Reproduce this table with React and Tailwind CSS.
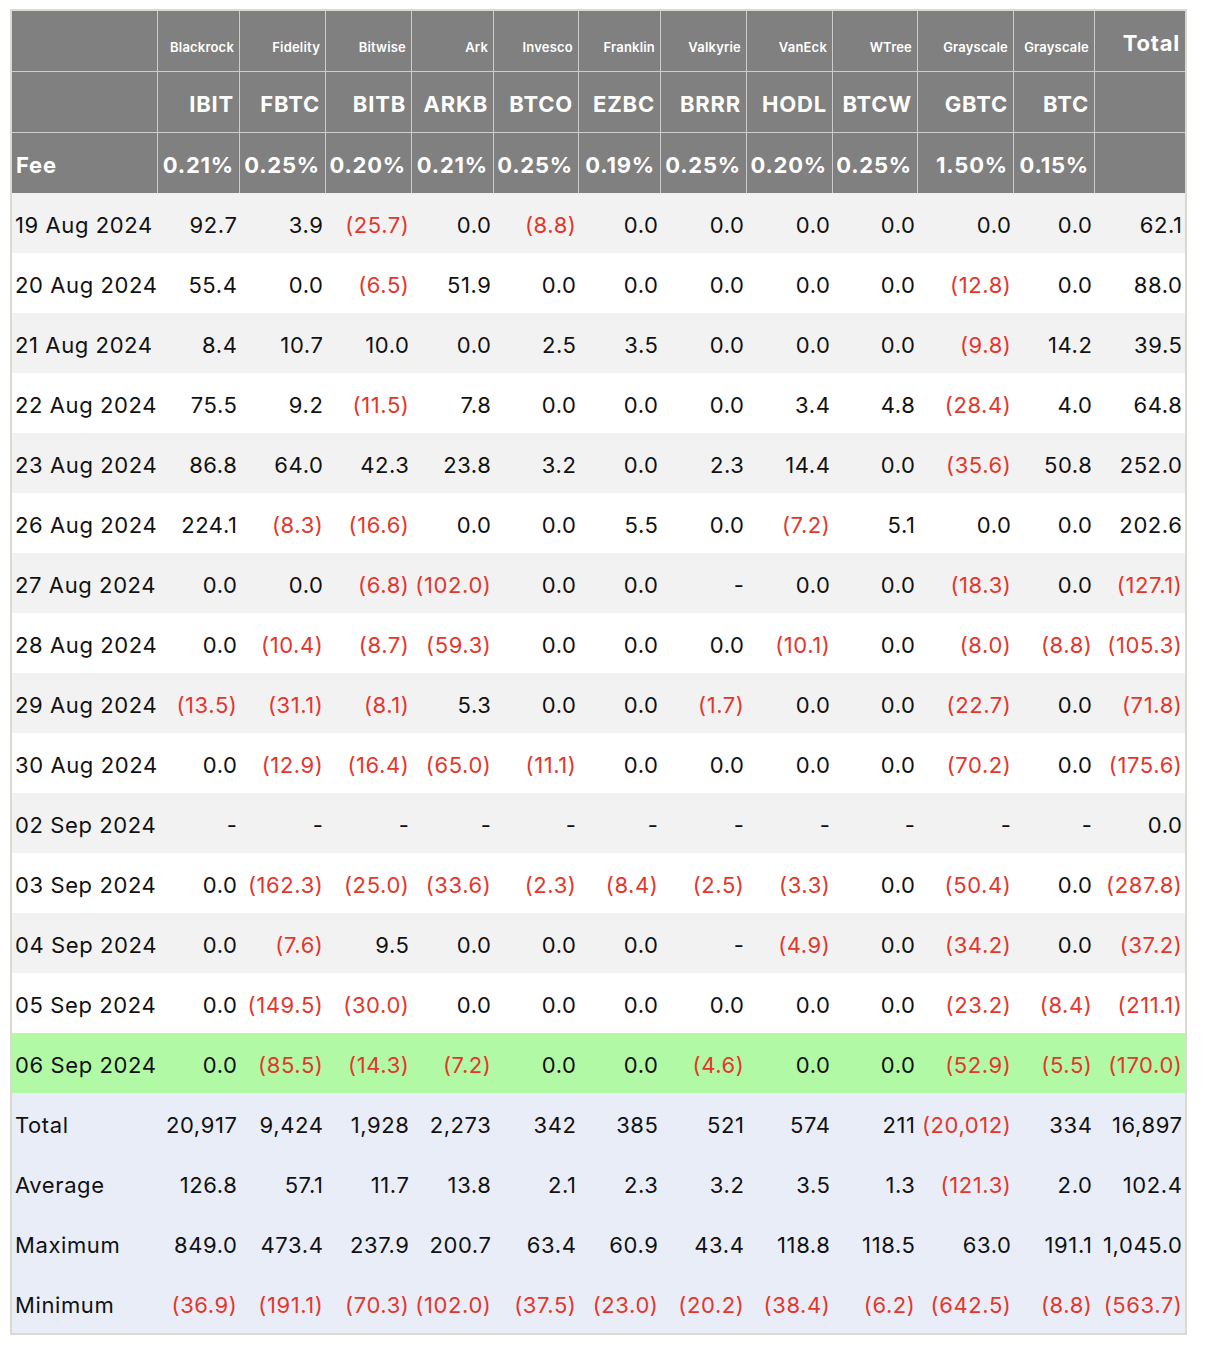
import React from "react";

const companies = ["Blackrock","Fidelity","Bitwise","Ark","Invesco","Franklin","Valkyrie","VanEck","WTree","Grayscale","Grayscale"];
const tickers = ["IBIT","FBTC","BITB","ARKB","BTCO","EZBC","BRRR","HODL","BTCW","GBTC","BTC"];
const fees = ["0.21%","0.25%","0.20%","0.21%","0.25%","0.19%","0.25%","0.20%","0.25%","1.50%","0.15%"];

const rows = [
  ["19 Aug 2024","92.7","3.9","(25.7)","0.0","(8.8)","0.0","0.0","0.0","0.0","0.0","0.0","62.1"],
  ["20 Aug 2024","55.4","0.0","(6.5)","51.9","0.0","0.0","0.0","0.0","0.0","(12.8)","0.0","88.0"],
  ["21 Aug 2024","8.4","10.7","10.0","0.0","2.5","3.5","0.0","0.0","0.0","(9.8)","14.2","39.5"],
  ["22 Aug 2024","75.5","9.2","(11.5)","7.8","0.0","0.0","0.0","3.4","4.8","(28.4)","4.0","64.8"],
  ["23 Aug 2024","86.8","64.0","42.3","23.8","3.2","0.0","2.3","14.4","0.0","(35.6)","50.8","252.0"],
  ["26 Aug 2024","224.1","(8.3)","(16.6)","0.0","0.0","5.5","0.0","(7.2)","5.1","0.0","0.0","202.6"],
  ["27 Aug 2024","0.0","0.0","(6.8)","(102.0)","0.0","0.0","-","0.0","0.0","(18.3)","0.0","(127.1)"],
  ["28 Aug 2024","0.0","(10.4)","(8.7)","(59.3)","0.0","0.0","0.0","(10.1)","0.0","(8.0)","(8.8)","(105.3)"],
  ["29 Aug 2024","(13.5)","(31.1)","(8.1)","5.3","0.0","0.0","(1.7)","0.0","0.0","(22.7)","0.0","(71.8)"],
  ["30 Aug 2024","0.0","(12.9)","(16.4)","(65.0)","(11.1)","0.0","0.0","0.0","0.0","(70.2)","0.0","(175.6)"],
  ["02 Sep 2024","-","-","-","-","-","-","-","-","-","-","-","0.0"],
  ["03 Sep 2024","0.0","(162.3)","(25.0)","(33.6)","(2.3)","(8.4)","(2.5)","(3.3)","0.0","(50.4)","0.0","(287.8)"],
  ["04 Sep 2024","0.0","(7.6)","9.5","0.0","0.0","0.0","-","(4.9)","0.0","(34.2)","0.0","(37.2)"],
  ["05 Sep 2024","0.0","(149.5)","(30.0)","0.0","0.0","0.0","0.0","0.0","0.0","(23.2)","(8.4)","(211.1)"],
  ["06 Sep 2024","0.0","(85.5)","(14.3)","(7.2)","0.0","0.0","(4.6)","0.0","0.0","(52.9)","(5.5)","(170.0)"],
];

const summary = [
  ["Total","20,917","9,424","1,928","2,273","342","385","521","574","211","(20,012)","334","16,897"],
  ["Average","126.8","57.1","11.7","13.8","2.1","2.3","3.2","3.5","1.3","(121.3)","2.0","102.4"],
  ["Maximum","849.0","473.4","237.9","200.7","63.4","60.9","43.4","118.8","118.5","63.0","191.1","1,045.0"],
  ["Minimum","(36.9)","(191.1)","(70.3)","(102.0)","(37.5)","(23.0)","(20.2)","(38.4)","(6.2)","(642.5)","(8.8)","(563.7)"],
];

const GRID = "grid grid-cols-[146px_82px_86px_86px_82px_85px_82px_86px_86px_85px_96px_81px_90px]";

function HeaderCell({ children, last, bottom, size, first }) {
  const border = `${last ? "" : "border-r"} ${bottom ? "border-b" : ""} border-[#cdcdcd]`;
  const h = bottom ? "h-[61px]" : "h-[60px]";
  const txt =
    size === "small"
      ? "text-[13px] leading-[16px] pt-[28px] tracking-[0.2px] font-semibold"
      : "text-[22px] leading-[26px] pt-[19px] tracking-[0.8px] font-bold";
  const align = first ? "text-left pl-[4px]" : "text-right pr-[5px]";
  return (
    <div className={`${h} ${border} ${txt} ${align} text-white whitespace-nowrap overflow-visible`}>
      {children}
    </div>
  );
}

function DataCell({ value, first }) {
  const neg = value.startsWith("(");
  const color = neg ? "text-[#e5362b]" : "text-[#111111]";
  const align = first ? "text-left pl-[3px]" : "text-right pr-[2.5px]";
  return (
    <div className={`h-[60px] pt-[19px] text-[22px] leading-[26px] tracking-[0.6px] whitespace-nowrap ${align} ${color}`}>
      {value}
    </div>
  );
}

export default function App() {
  return (
    <div className="min-h-[1352px] bg-white pl-[10px] pt-[9px] font-['Inter','Liberation_Sans',sans-serif]">
      <div className="w-[1177px] border-2 border-[#dcd9cf]">
        <div className={`${GRID} bg-[#808080]`}>
          <HeaderCell bottom first size="small"></HeaderCell>
          {companies.map((c, i) => (
            <HeaderCell key={i} bottom size="small">{c}</HeaderCell>
          ))}
          <HeaderCell bottom last>Total</HeaderCell>
        </div>
        <div className={`${GRID} bg-[#808080]`}>
          <HeaderCell bottom first></HeaderCell>
          {tickers.map((t, i) => (
            <HeaderCell key={i} bottom>{t}</HeaderCell>
          ))}
          <HeaderCell bottom last></HeaderCell>
        </div>
        <div className={`${GRID} bg-[#808080]`}>
          <HeaderCell first>Fee</HeaderCell>
          {fees.map((f, i) => (
            <HeaderCell key={i}>{f}</HeaderCell>
          ))}
          <HeaderCell last></HeaderCell>
        </div>
        {rows.map((r, ri) => {
          const bg =
            ri === rows.length - 1 ? "bg-[#b1f9a4]" : ri % 2 === 0 ? "bg-[#f2f2f2]" : "bg-white";
          return (
            <div key={ri} className={`${GRID} ${bg}`}>
              {r.map((v, ci) => (
                <DataCell key={ci} value={v} first={ci === 0} />
              ))}
            </div>
          );
        })}
        {summary.map((r, ri) => (
          <div key={ri} className={`${GRID} bg-[#e9edf8]`}>
            {r.map((v, ci) => (
              <DataCell key={ci} value={v} first={ci === 0} />
            ))}
          </div>
        ))}
      </div>
    </div>
  );
}
